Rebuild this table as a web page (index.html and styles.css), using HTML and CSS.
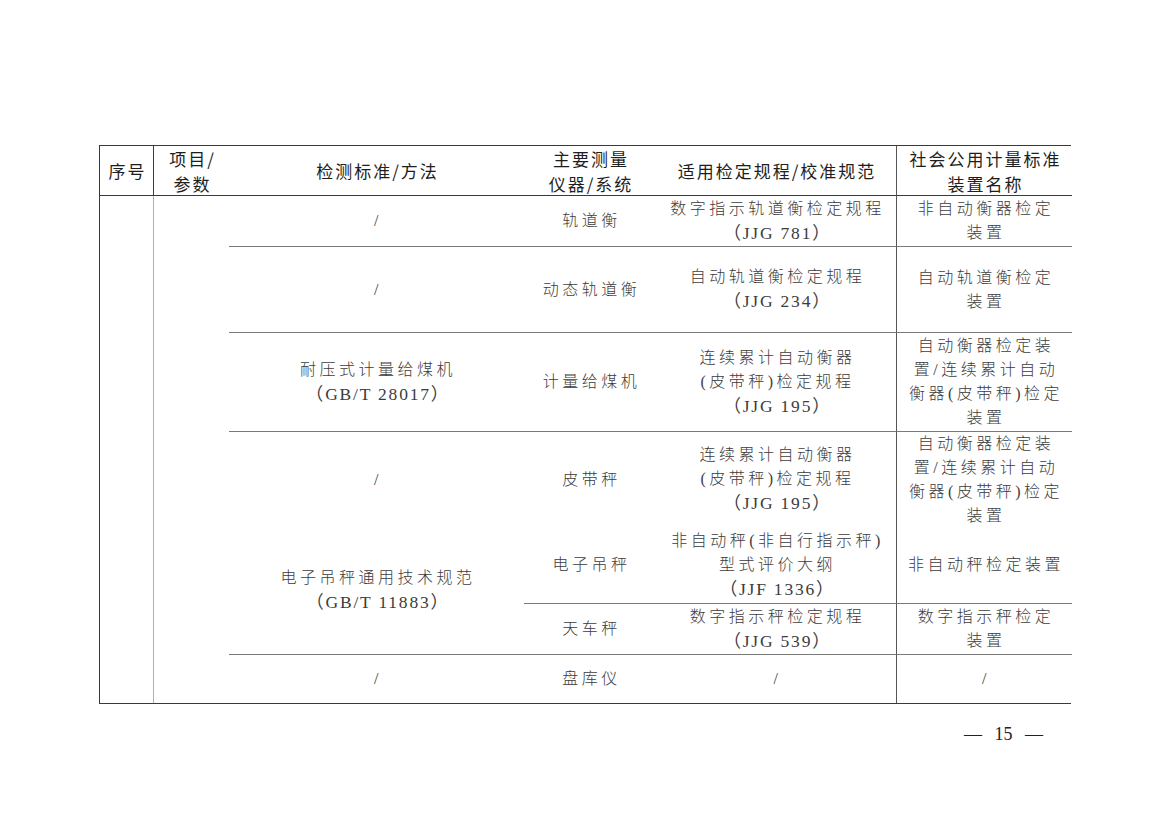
FILE: index.html
```html
<!DOCTYPE html>
<html lang="zh-CN">
<head>
<meta charset="utf-8">
<title>表</title>
<link rel="stylesheet" href="styles.css">
</head>
<body>
<div class="page">
  <div class="tbl">
    <div class="th th-no"><div>序号</div></div>
    <div class="th"><div>项目/<br>参数</div></div>
    <div class="th"><div>检测标准/方法</div></div>
    <div class="th"><div>主要测量<br>仪器/系统</div></div>
    <div class="th vr"><div>适用检定规程/校准规范</div></div>
    <div class="th"><div>社会公用计量标准<br>装置名称</div></div>

    <div class="c col-no"></div>
    <div class="c col-item"></div>

    <div class="c bb std r2"><div>/</div></div>
    <div class="c bb ins r2"><div>轨道衡</div></div>
    <div class="c bb reg vr r2"><div>数字指示轨道衡检定规程<br><span class="lat">（JJG 781）</span></div></div>
    <div class="c bb dev r2"><div>非自动衡器检定<br>装置</div></div>

    <div class="c bb std r3"><div>/</div></div>
    <div class="c bb ins r3"><div>动态轨道衡</div></div>
    <div class="c bb reg vr r3"><div>自动轨道衡检定规程<br><span class="lat">（JJG 234）</span></div></div>
    <div class="c bb dev r3"><div>自动轨道衡检定<br>装置</div></div>

    <div class="c bb std r4"><div>耐压式计量给煤机<br><span class="lat">（GB/T 28017）</span></div></div>
    <div class="c bb ins r4"><div>计量给煤机</div></div>
    <div class="c bb reg vr r4"><div>连续累计自动衡器<br>(皮带秤)检定规程<br><span class="lat">（JJG 195）</span></div></div>
    <div class="c bb dev r4"><div>自动衡器检定装<br>置/连续累计自动<br>衡器(皮带秤)检定<br>装置</div></div>

    <div class="c std r5"><div>/</div></div>
    <div class="c ins r5"><div>皮带秤</div></div>
    <div class="c reg vr r5"><div>连续累计自动衡器<br>(皮带秤)检定规程<br><span class="lat">（JJG 195）</span></div></div>
    <div class="c dev r5"><div>自动衡器检定装<br>置/连续累计自动<br>衡器(皮带秤)检定<br>装置</div></div>

    <div class="c bb std r67"><div>电子吊秤通用技术规范<br><span class="lat">（GB/T 11883）</span></div></div>
    <div class="c bb ins r6"><div>电子吊秤</div></div>
    <div class="c bb reg vr r6"><div>非自动秤(非自行指示秤)<br>型式评价大纲<br><span class="lat">（JJF 1336）</span></div></div>
    <div class="c bb dev r6"><div>非自动秤检定装置</div></div>

    <div class="c bb ins r7"><div>天车秤</div></div>
    <div class="c bb reg vr r7"><div>数字指示秤检定规程<br><span class="lat">（JJG 539）</span></div></div>
    <div class="c bb dev r7"><div>数字指示秤检定<br>装置</div></div>

    <div class="c std r8"><div>/</div></div>
    <div class="c ins r8"><div>盘库仪</div></div>
    <div class="c reg vr r8"><div>/</div></div>
    <div class="c dev r8"><div>/</div></div>
  </div>
  <div class="pageno">— 15 —</div>
</div>
</body>
</html>
```

FILE: styles.css
```css
html, body {
  margin: 0;
  padding: 0;
  background: #ffffff;
}

.page {
  padding-top: 145px;
  padding-left: 99px;
  width: 972px;
}

.tbl {
  display: grid;
  grid-template-columns: 54px 75px 295px 132px 241px 175px;
  grid-template-rows: 50px 51px 86px 99px 95px 77px 51px 48px;
  border-top: 1px solid #3a3a3a;
  border-left: 1px solid #3a3a3a;
  border-bottom: 1px solid #3a3a3a;
  width: 972px;
  box-sizing: border-box;
}

.th,
.c {
  box-sizing: border-box;
  display: flex;
  align-items: center;
  justify-content: center;
  text-align: center;
}

.th {
  grid-row: 1;
  border-bottom: 1px solid #3a3a3a;
  font-family: "Noto Sans CJK SC", "Noto Sans", sans-serif;
  font-size: 17px;
  line-height: 25px;
  color: #1e1e1e;
  letter-spacing: 2px;
  padding-left: 2px;
}

.th-no {
  border-right: 1px solid #3a3a3a;
}

.c {
  font-family: "Liberation Serif", "Noto Sans CJK SC", serif;
  font-weight: 300;
  font-size: 16px;
  line-height: 24px;
  color: #3c3c3c;
  letter-spacing: 3.5px;
  padding-left: 3px;
}

.col-no {
  grid-column: 1;
  grid-row: 2 / 9;
  border-right: 1px solid #b0b0b0;
}

.col-item {
  grid-column: 2;
  grid-row: 2 / 9;
}

.std { grid-column: 3; }
.ins { grid-column: 4; }
.reg { grid-column: 5; }
.dev { grid-column: 6; }

.r2 { grid-row: 2; }
.r3 { grid-row: 3; }
.r4 { grid-row: 4; }
.r5 { grid-row: 5; }
.r6 { grid-row: 6; }
.r7 { grid-row: 7; }
.r8 { grid-row: 8; }
.r67 { grid-row: 6 / 8; }

.bb {
  border-bottom: 1px solid #7a7a7a;
}

.vr {
  border-right: 1px solid #555555;
}

.lat {
  font-family: "Liberation Serif", "Noto Sans CJK SC", serif;
  font-weight: 400;
  font-size: 17.5px;
  letter-spacing: 1.8px;
}

.pageno {
  margin-top: 19px;
  text-align: right;
  padding-right: 28px;
  font-family: "Liberation Serif", serif;
  font-size: 18px;
  line-height: 22px;
  color: #222222;
  word-spacing: 8px;
}
```
